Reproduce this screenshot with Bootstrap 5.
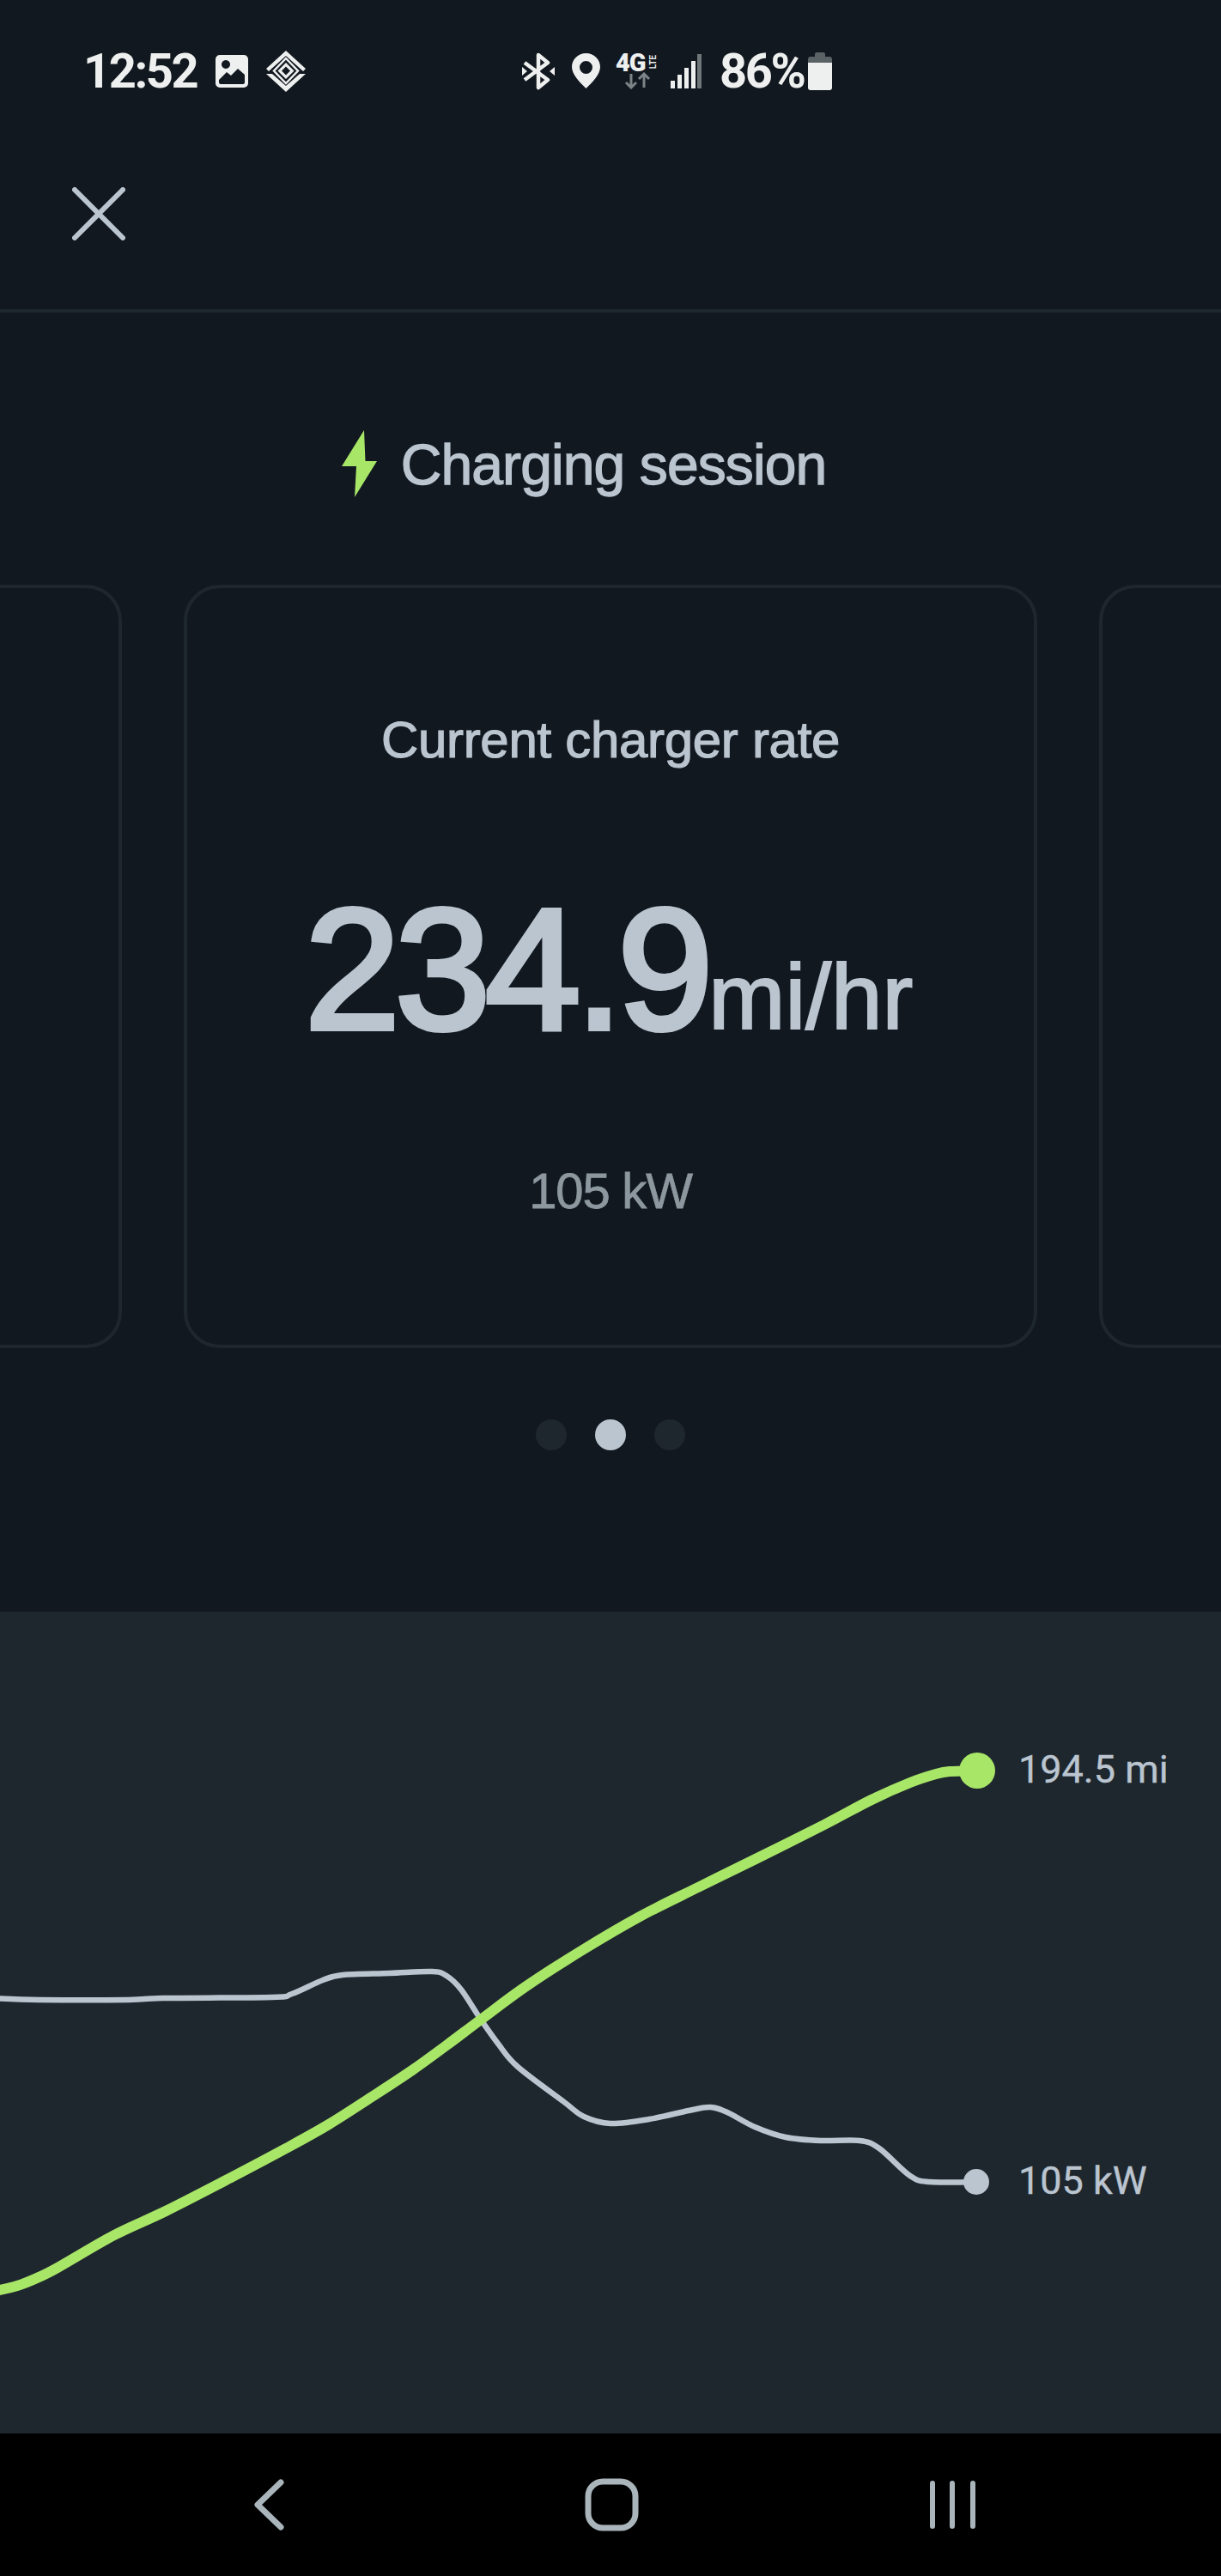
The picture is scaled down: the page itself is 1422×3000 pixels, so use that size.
<!DOCTYPE html>
<html lang="en">
<head>
  <meta charset="UTF-8">
  <meta name="viewport" content="width=device-width, initial-scale=1.0">
  <title>Charging session</title>

  <link href="https://cdn.jsdelivr.net/npm/bootstrap@5.3.0/dist/css/bootstrap.min.css" rel="stylesheet">

  <style>
    body {
      background-color: #12181f;
      font-family: "Liberation Sans", Arial, sans-serif;
      color: #bac5d0;
      width: 1422px;
      height: 3000px;
      overflow: hidden;
    }

    .status-bar {
      height: 165px;
      padding: 0 0 0 97px;
      color: #eef0f0;
      font-family: Roboto, sans-serif;
      font-weight: 700;
      font-size: 56px;
      letter-spacing: -2.4px;
    }

    .status-time { width: 134px; }
    .status-left { gap: 19px; }
    .status-right { margin-left: 251px; }
    .gap-bt { margin-left: 20px; }
    .gap-net { margin-left: 18px; }
    .gap-sig { margin-left: 11px; }
    .gap-pct { margin-left: 21px; }
    .gap-bat { margin-left: 5px; }

    .net-icon {
      width: 53px;
      height: 42px;
      letter-spacing: 0;
    }

    .net-top {
      height: 22px;
      line-height: 22px;
      font-size: 29px;
      font-weight: 900;
      letter-spacing: -1px;
    }

    .net-lte {
      writing-mode: vertical-rl;
      transform: rotate(180deg);
      font-size: 10px;
      line-height: 11px;
      font-weight: 700;
      letter-spacing: 0;
      margin-left: 3px;
    }

    .top-bar {
      height: 199px;
      padding-left: 84px;
      padding-top: 53px;
      border-bottom: 4px solid #1f272e;
    }

    .title-row {
      height: 317px;
      padding-top: 137px;
      padding-right: 62px;
      gap: 28px;
      font-size: 66px;
      line-height: 80px;
      letter-spacing: -0.9px;
      -webkit-text-stroke: 1.3px #bac5d0;
    }

    .slider {
      gap: 72px;
      overflow: hidden;
      height: 889px;
    }

    .slide {
      flex: 0 0 994px;
      height: 889px;
      background: transparent;
      border: 4px solid #1f272e;
      border-radius: 42px;
      color: #bac5d0;
    }

    .slide-title {
      margin-top: 142px;
      font-size: 60px;
      line-height: 70px;
      letter-spacing: -0.3px;
      -webkit-text-stroke: 1.2px #bac5d0;
    }

    .rate-row {
      margin-top: 142px;
      height: 180px;
      line-height: 180px;
      margin-left: -4px;
    }

    .rate-value {
      font-size: 200px;
      letter-spacing: -6.2px;
      -webkit-text-stroke: 6px #bac5d0;
    }

    .rate-unit {
      font-size: 107px;
      margin-left: 1px;
      -webkit-text-stroke: 2.2px #bac5d0;
    }

    .slide-note {
      margin-top: 133px;
      font-size: 58px;
      line-height: 70px;
      letter-spacing: -1.2px;
      color: #8d979f;
      -webkit-text-stroke: 0.8px #8d979f;
    }

    .pager {
      height: 307px;
      padding-top: 83px;
      gap: 33px;
    }

    .pager-dot {
      width: 36px;
      height: 36px;
      border-radius: 50%;
      background: #1f272e;
    }

    .pager-dot.active { background: #bac5d0; }

    .chart-panel {
      height: 957px;
      background: #1f272e;
    }

    .chart-panel svg { display: block; }

    .chart-label {
      position: absolute;
      left: 1186px;
      font-family: Roboto, sans-serif;
      font-size: 45px;
      line-height: 52px;
      color: #bac5d0;
      -webkit-text-stroke: 0.4px #bac5d0;
    }

    .label-range { top: 158px; }
    .label-power { top: 637px; }

    .nav-bar {
      height: 166px;
      background: #000;
    }

    .nav-bar svg {
      position: absolute;
      left: 0;
      top: 0;
    }
  </style>
</head>

<body>

<div class="status-bar d-flex align-items-center">
  <div class="d-flex align-items-center status-left">
    <span class="status-time">12:52</span>
    <!-- gallery -->
    <svg width="40" height="40" viewBox="0 0 40 40" class="flex-shrink-0">
      <path fill="#eef0f0" fill-rule="evenodd" d="M6 1h28a5 5 0 0 1 5 5v28a5 5 0 0 1-5 5H6a5 5 0 0 1-5-5V6a5 5 0 0 1 5-5zM5 30v3q0 2 2 2h26q2 0 2-2V24l-8-7-8 8-5-4zM13 7a5 5 0 1 0 .01 0z"/>
    </svg>
    <!-- app logo -->
    <svg width="48" height="48" viewBox="0 0 48 48" class="flex-shrink-0">
      <path fill="#eef0f0" d="M24 0 47 21 44 24 24 6 4 24 1 21z"/>
      <path fill="#eef0f0" d="M1 27H8L24 41 40 27H47L24 48z"/>
      <path fill="none" stroke="#eef0f0" stroke-width="2.500" d="M24 9 38 23.500 24 38 10 23.500z"/>
      <path fill="#eef0f0" d="M24 14 33.500 23.500 24 33 14.500 23.500z"/>
      <path fill="#12181f" d="M24 18.500 29 23.500 24 28.500 19 23.500z"/>
    </svg>
  </div>
  <div class="d-flex align-items-center status-right">
    <!-- bluetooth -->
    <svg width="38" height="44" viewBox="0 0 38 44" class="flex-shrink-0">
      <g fill="none" stroke="#eef0f0" stroke-width="4.5" stroke-linejoin="round">
        <path d="M3 12 30 32 19 41V3l11 9L3 32"/>
      </g>
      <path fill="#eef0f0" d="M0 17l6 5-6 5zM38 17l-6 5 6 5z"/>
    </svg>
    <!-- location -->
    <svg width="33" height="41" viewBox="0 0 33 41" class="flex-shrink-0 gap-bt">
      <path fill="#eef0f0" fill-rule="evenodd" d="M16.5 0C7.4 0 0 7.2 0 16c0 9 9.500 18 16.500 25C23.500 34 33 25 33 16 33 7.200 25.600 0 16.500 0zm0 9a7.500 7.500 0 1 1 0 15 7.500 7.500 0 0 1 0-15z"/>
    </svg>
    <!-- network -->
    <div class="net-icon d-flex flex-column flex-shrink-0 gap-net">
      <div class="net-top d-flex align-items-center">
        <span>4G</span><span class="net-lte">LTE</span>
      </div>
      <svg width="53" height="20" viewBox="0 0 53 20" class="d-block">
        <g fill="none" stroke="#7c8487" stroke-width="3">
          <path d="M18 2v16M12 12l6 6 6-6"/>
          <path d="M33 18V2M27 8l6-6 6 6"/>
        </g>
      </svg>
    </div>
    <!-- signal -->
    <svg width="36" height="40" viewBox="0 0 36 40" class="flex-shrink-0 gap-sig">
      <path fill="#eef0f0" d="M0 31h5v9H0zM8 24h5v16H8zM16 16h5v24h-5zM24 8h5v32h-5z"/>
      <path fill="#6f7678" d="M31 0h5v40h-5z"/>
    </svg>
    <span class="gap-pct">86%</span>
    <!-- battery -->
    <svg width="28" height="44" viewBox="0 0 28 44" class="flex-shrink-0 gap-bat">
      <path fill="#5a6265" d="M8 2q0-2 2-2h8q2 0 2 2v3h5q3 0 3 3v6H0V8q0-3 3-3h5z"/>
      <path fill="#eef0f0" d="M0 12h28v29q0 3-3 3H3q-3 0-3-3z"/>
    </svg>
  </div>
</div>

<div class="top-bar">
  <svg width="62" height="62" viewBox="0 0 62 62" class="d-block">
    <path d="M3 3 59 59M59 3 3 59" stroke="#bac5d0" stroke-width="6" stroke-linecap="round"/>
  </svg>
</div>

<div class="title-row d-flex justify-content-center align-items-start">
  <svg width="41" height="78" viewBox="0 0 41 78" class="flex-shrink-0">
    <path fill="#a8e667" d="M26 0 0 42H17L15 78 41 36H27.500z"/>
  </svg>
  <span>Charging session</span>
</div>

<div class="slider d-flex justify-content-center">
  <div class="card slide"></div>
  <div class="card slide text-center align-items-center">
    <div class="slide-title">Current charger rate</div>
    <div class="rate-row d-flex align-items-baseline justify-content-center">
      <span class="rate-value">234.9</span><span class="rate-unit">mi/hr</span>
    </div>
    <div class="slide-note">105 kW</div>
  </div>
  <div class="card slide"></div>
</div>

<div class="pager d-flex justify-content-center align-items-start">
  <span class="pager-dot"></span>
  <span class="pager-dot active"></span>
  <span class="pager-dot"></span>
</div>

<div class="chart-panel position-relative">
  <svg width="1422" height="957" viewBox="0 1877 1422 957">
    <path id="linePower" fill="none" stroke="#bac5d0" stroke-width="6.5" stroke-linecap="round"/>
    <path id="lineRange" fill="none" stroke="#a8e667" stroke-width="12" stroke-linecap="round"/>
    <circle cx="1137" cy="2541" r="15" fill="#bac5d0"/>
    <circle cx="1138" cy="2062" r="21" fill="#a8e667"/>
  </svg>
  <span class="chart-label label-range">194.5 mi</span>
  <span class="chart-label label-power">105 kW</span>
</div>

<div class="nav-bar position-relative">
  <svg width="1422" height="166" viewBox="0 2834 1422 166">
    <g fill="none" stroke="#a9b5bb" stroke-linecap="round" stroke-linejoin="round">
      <path d="M327 2891 300 2917 327 2943" stroke-width="7"/>
      <rect x="685" y="2890" width="55" height="54" rx="17" stroke-width="7"/>
      <path d="M1086 2892v50M1109 2892v50M1133 2892v50" stroke-width="6"/>
    </g>
  </svg>
</div>

<script src="https://cdn.jsdelivr.net/npm/bootstrap@5.3.0/dist/js/bootstrap.bundle.min.js"></script>

<script>
  // pontos lidos do grafico, coordenadas da pagina
  const power = [[-10,2327],[45,2329],[150,2329],[190,2327],[317,2326],[340,2322],[376,2306],[399,2300],[454,2298],[503,2296],[520,2301],[537,2317],[560,2352],[580,2380],[603,2407],[657,2448],[680,2465],[711,2473],[756,2468],[802,2458],[827,2454],[847,2460],[879,2477],[915,2489],[956,2493],[1001,2493],[1024,2502],[1060,2534],[1083,2541],[1137,2541]];
  const range = [[-5,2668],[20,2662],[43,2653],[67,2641],[133,2603],[193,2575],[267,2537],[333,2502],[383,2474],[433,2442],[480,2411],[520,2382],[560,2352],[613,2313],[680,2270],[747,2231],[813,2198],[880,2165],[960,2125],[1015,2096],[1060,2076],[1090,2066],[1106,2063],[1138,2062]];

  function suavizar(p) {
    let d = 'M' + p[0][0] + ' ' + p[0][1];
    for (let i = 0; i < p.length - 1; i++) {
      const a = p[i - 1] || p[i], b = p[i], c = p[i + 1], e = p[i + 2] || c;
      d += ' C' + (b[0] + (c[0] - a[0]) / 6) + ' ' + (b[1] + (c[1] - a[1]) / 6) + ' ' +
        (c[0] - (e[0] - b[0]) / 6) + ' ' + (c[1] - (e[1] - b[1]) / 6) + ' ' + c[0] + ' ' + c[1];
    }
    return d;
  }

  document.getElementById('linePower').setAttribute('d', suavizar(power));
  document.getElementById('lineRange').setAttribute('d', suavizar(range));
</script>

</body>
</html>
